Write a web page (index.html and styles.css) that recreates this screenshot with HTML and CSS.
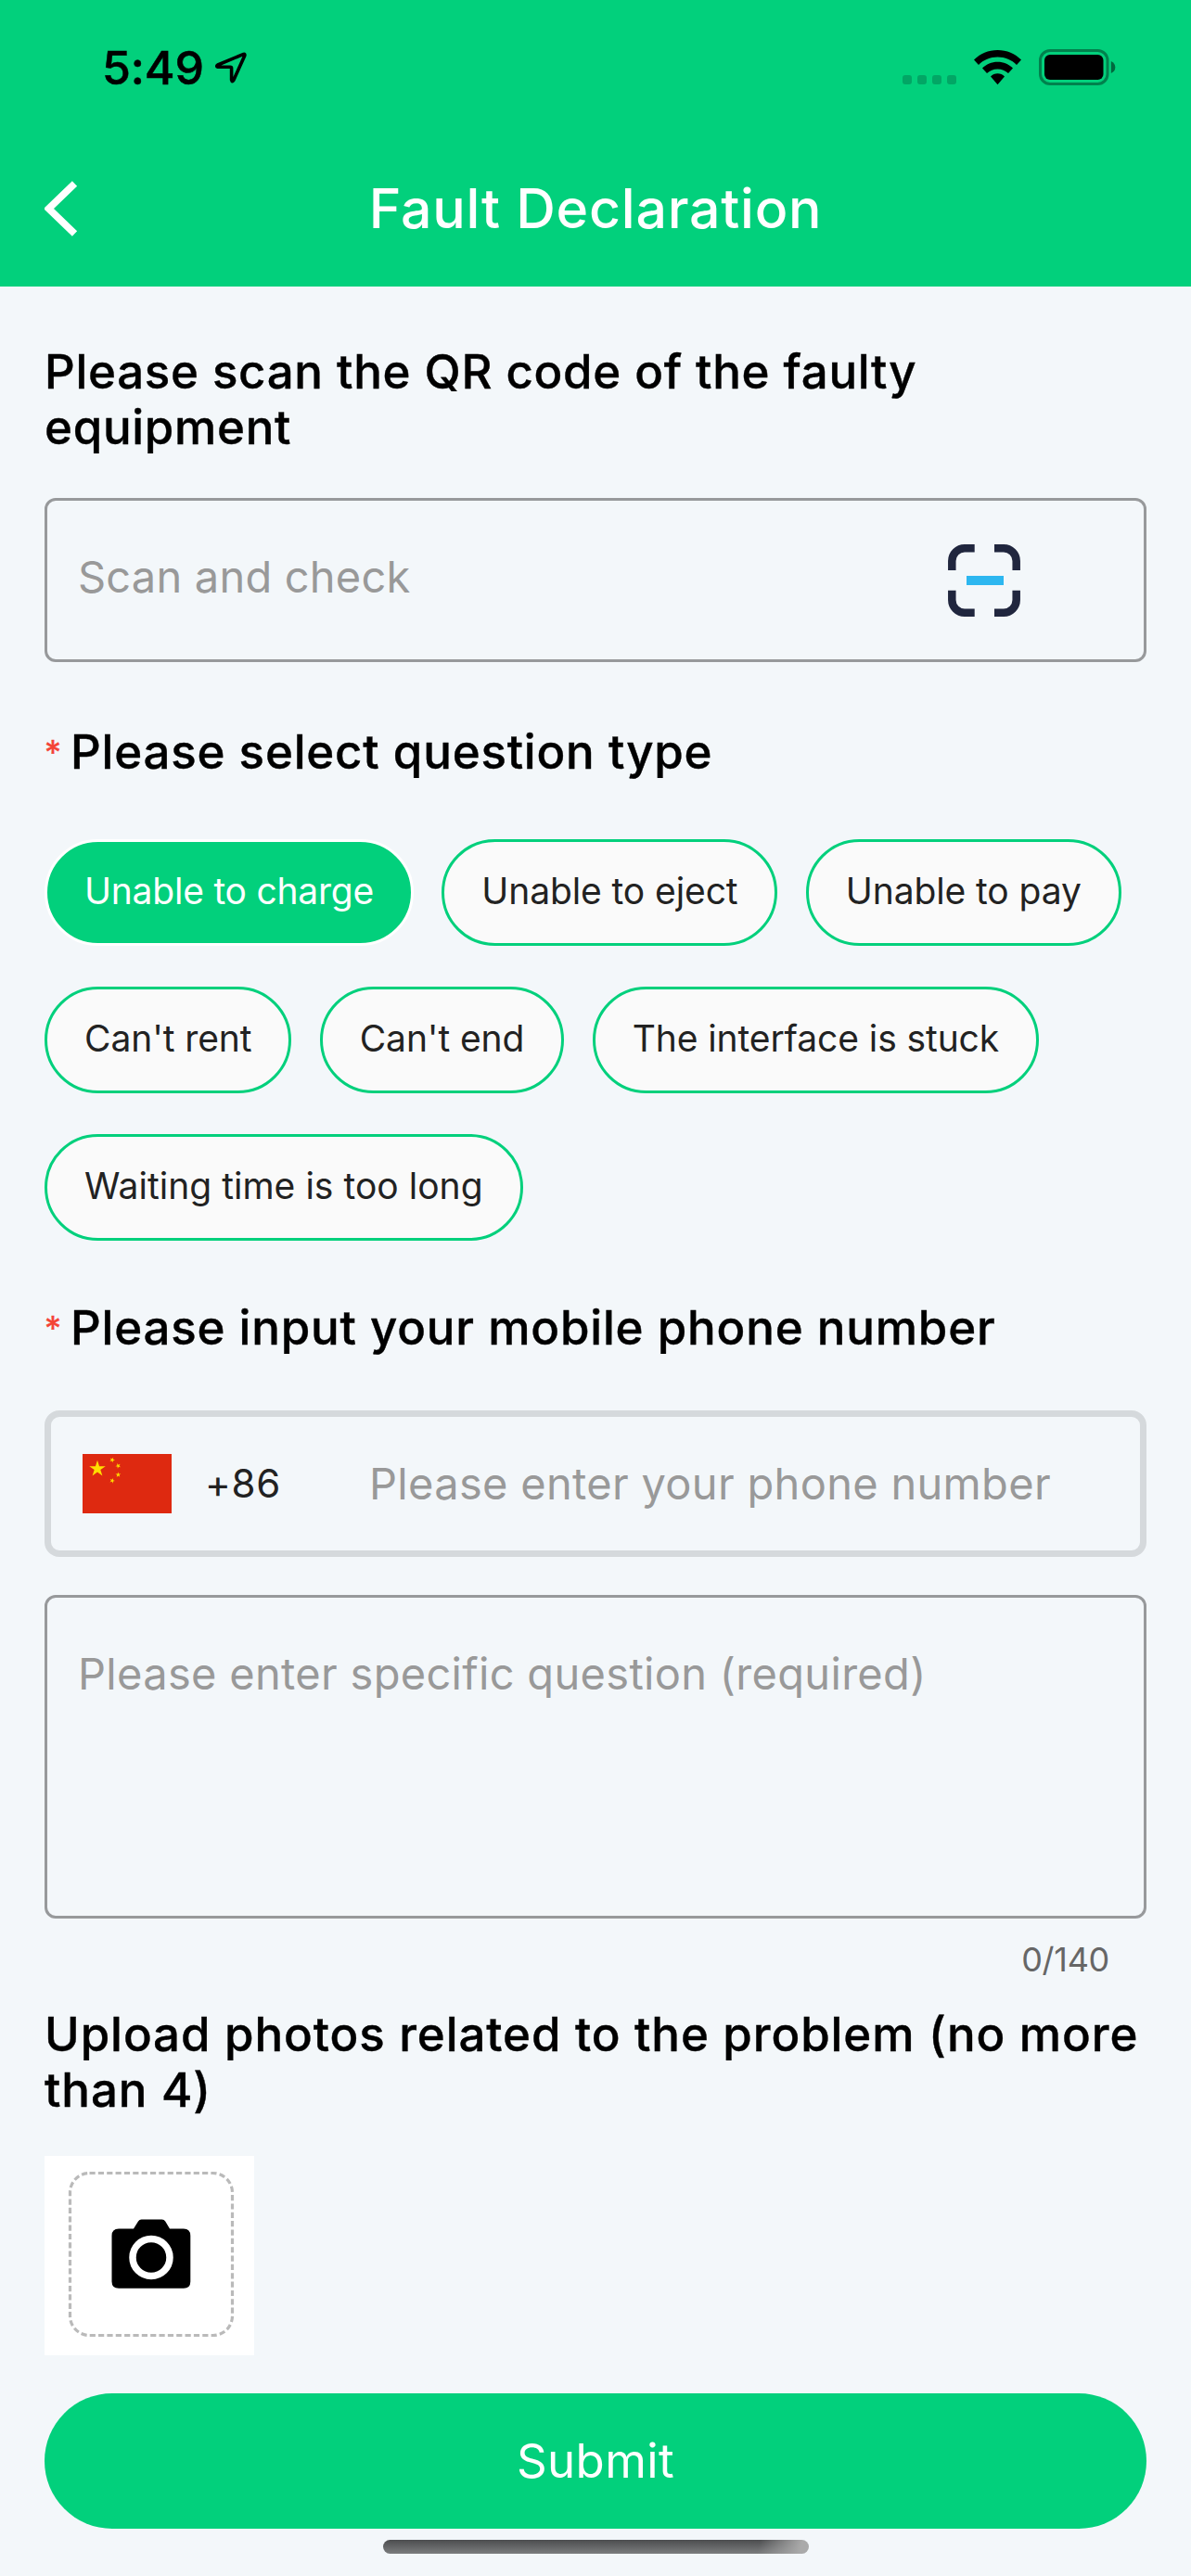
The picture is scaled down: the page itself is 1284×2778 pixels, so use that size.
FILE: index.html
```html
<!DOCTYPE html>
<html lang="en">
<head>
<meta charset="utf-8">
<title>Fault Declaration</title>
<link rel="stylesheet" href="styles.css">
</head>
<body>
<header class="header">
  <div class="status">
    <div class="status-left">
      <span class="time">5:49</span>
      <svg class="location" width="34" height="34" viewBox="0 0 34 34"><path d="M30.600 2.400L2.800 14Q.6 15.600 2.900 16.200H16.200Q17.600 16.200 17.600 17.600V30.200Q18.200 33 19.800 30.600L31.800 4Q32.200 2 30.600 2.400Z" fill="none" stroke="#000" stroke-width="3.600" stroke-linejoin="round"/></svg>
    </div>
    <div class="status-right">
      <div class="signal"><i></i><i></i><i></i><i></i></div>
      <svg class="wifi" width="51" height="38" viewBox="0 0 51 38"><path d="M25.5 0C35.400 0 44.400 3.900 51 10.600L46 16C40.700 10.700 33.500 7.600 25.500 7.600S10.300 10.700 5 16L0 10.600C6.600 3.900 15.600 0 25.500 0Z"/><path d="M25.500 12.700C31.900 12.700 37.700 15.200 42 19.400L37 25C34 22.200 30 20.400 25.500 20.400S17 22.200 14 25L9 19.400C13.300 15.200 19.100 12.700 25.500 12.700Z"/><path d="M25.500 25.300C28.400 25.300 31 26.400 33 28.400L25.500 37.300L18 28.400C20 26.400 22.600 25.300 25.500 25.300Z"/></svg>
      <svg class="battery" width="83" height="39" viewBox="0 0 83 39"><rect x="1.5" y="1.500" width="72.500" height="36" rx="10.500" fill="none" stroke="#000" stroke-opacity=".38" stroke-width="3"/><rect x="6" y="6" width="63.500" height="27" rx="6"/><path d="M77.800 13Q82.300 15 82.300 19.500T77.800 26Z" fill-opacity=".5"/></svg>
    </div>
  </div>
  <nav class="nav">
    <svg class="back" width="36" height="60" viewBox="0 0 36 60"><path d="M32.500 3L4.500 30L32.500 57" fill="none" stroke="#fff" stroke-width="7.600"/></svg>
    <h1 class="title">Fault Declaration</h1>
  </nav>
</header>
<main class="form">
  <h2 class="label">Please scan the QR code of the faulty<br>equipment</h2>
  <div class="field scan">
    <span class="placeholder">Scan and check</span>
    <svg width="78" height="78" viewBox="0 0 78 78" fill="none" stroke="#20263e" stroke-width="8.500"><path d="M4.300 28V18A13.700 13.700 0 0 1 18 4.300H28.700M50 4.300H60A13.700 13.700 0 0 1 73.700 18V28M4.300 49.700V60A13.700 13.700 0 0 0 18 73.700H28.700M50 73.700H60A13.700 13.700 0 0 0 73.700 60V49.700"/><path d="M20 39H60" stroke="#2db7f0" stroke-width="10"/></svg>
  </div>
  <h2 class="label required"><i class="star">*</i>Please select question type</h2>
  <div class="chips">
    <div class="chip-row"><button class="chip active">Unable to charge</button><button class="chip">Unable to eject</button><button class="chip">Unable to pay</button></div>
    <div class="chip-row"><button class="chip">Can't rent</button><button class="chip">Can't end</button><button class="chip">The interface is stuck</button></div>
    <div class="chip-row"><button class="chip wide">Waiting time is too long</button></div>
  </div>
  <h2 class="label required"><i class="star">*</i>Please input your mobile phone number</h2>
  <div class="field phone">
    <svg width="96" height="64" viewBox="0 0 96 64"><defs><path id="star" d="M0 -1L.2245 -.309H.951L.363 .118L.588 .809L0 .382L-.588 .809L-.363 .118L-.951 -.309H-.2245Z"/></defs><path fill="#de2910" d="M0 0H96V64H0Z"/><g fill="#ffde00"><use href="#star" transform="translate(16 16) scale(9.200)"/><use href="#star" transform="translate(32 6.400) rotate(23) scale(3)"/><use href="#star" transform="translate(38.400 12.800) rotate(46) scale(3)"/><use href="#star" transform="translate(38.400 22.400) rotate(70) scale(3)"/><use href="#star" transform="translate(32 28.800) rotate(21) scale(3)"/></g></svg>
    <span class="code">+86</span>
    <span class="placeholder">Please enter your phone number</span>
  </div>
  <div class="field details"><span class="placeholder">Please enter specific question (required)</span></div>
  <div class="counter">0/140</div>
  <h2 class="label upload-label">Upload photos related to the problem (no more<br>than 4)</h2>
  <div class="upload">
    <svg width="226" height="215" viewBox="0 0 226 215"><rect x="27.500" y="18.500" width="175" height="175" rx="21" fill="none" stroke="#bababa" stroke-width="3.200" stroke-dasharray="6.200 3.150"/><path d="M80 78.500H96L101 70.500Q102.200 68.500 104.500 68.500H126.500Q129 68.500 130.200 70.500L135 78.500H150Q157.300 78.500 157.300 86V135.500Q157.300 142.700 150 142.700H80Q72.500 142.700 72.500 135.500V86Q72.500 78.500 80 78.500Z"/><circle cx="115" cy="109.500" r="20" fill="none" stroke="#fff" stroke-width="7.500"/></svg>
  </div>
  <button class="submit">Submit</button>
</main>
<div class="home"></div>
</body>
</html>
```
FILE: styles.css
```css
* { box-sizing: border-box; }
body {
  margin: 0;
  width: 1284px;
  height: 2778px;
  overflow: hidden;
  background: #f3f7fa;
  color: #000;
  font-family: Inter, "Liberation Sans", sans-serif;
}
svg { display: block; flex: none; }
.header { height: 309px; background: #02d07c; }
.status { height: 141px; padding: 4px 81px 0 110px; display: flex; justify-content: space-between; align-items: center; }
.status-left, .status-right { display: flex; align-items: center; }
.time { font-size: 50px; font-weight: 500; line-height: 60px; letter-spacing: -.1px; -webkit-text-stroke: .5px #000; }
.location { margin-left: 12px; }
.signal { display: flex; gap: 6px; padding-top: 27px; margin-right: 19px; }
.signal i { width: 10px; height: 10px; border-radius: 3px; background: #02a665; }
.wifi { margin-right: 19px; }
.nav { height: 168px; padding: 0 48px; display: grid; grid-template-columns: 36px 1fr 36px; align-items: center; }
.title { margin: 0; color: #fff; font-size: 59px; font-weight: 500; line-height: 72px; letter-spacing: .75px; text-align: center; }
.form { padding: 62px 48px 0; display: flex; flex-direction: column; }
.label { margin: 0; font-size: 51px; font-weight: 500; line-height: 60px; letter-spacing: .7px; white-space: nowrap; -webkit-text-stroke: .4px #000; }
.required { display: flex; letter-spacing: .8px; }
.star { width: 28px; color: #f44336; font-size: 36px; font-style: normal; font-weight: 400; -webkit-text-stroke: .4px #f44336; }
.upload-label { letter-spacing: .92px; }
.field { display: flex; align-items: center; border: 3px solid #97999b; border-radius: 12px; }
.placeholder { font-size: 47px; line-height: 58px; letter-spacing: .31px; color: #999; white-space: nowrap; }
.scan { height: 177px; margin: 46px 0 67px; padding: 0 133px 0 33px; justify-content: space-between; }
.scan .placeholder { padding-bottom: 8px; letter-spacing: .2px; }
.chips { display: flex; flex-direction: column; gap: 44px; margin: 64px 0; }
.chip-row { display: flex; gap: 30.300px; }
.chip { height: 115px; padding: 0 40px 3px; border: 3px solid #02d07c; border-radius: 58px; background: #fafafa; color: #222; font: 400 39px/48px Inter, "Liberation Sans", sans-serif; letter-spacing: -.1px; white-space: nowrap; }
.chip.active { border-color: #fff; background: #02d07c; color: #fff; letter-spacing: -.23px; }
.chip.wide { letter-spacing: .03px; }
.phone { height: 158px; margin-top: 59px; padding: 0 33px 0 34px; border: 7px solid #d5d9dc; border-radius: 16px; }
.code { width: 177px; margin-left: 36px; padding-bottom: 2px; font-size: 42px; letter-spacing: .8px; color: #222; }
.details { height: 349px; margin-top: 41px; padding: 53px 33px; align-items: flex-start; }
.counter { height: 44px; margin: 22px 40px 29px; text-align: right; font-size: 36px; line-height: 44px; letter-spacing: -.3px; color: #666; }
.upload { width: 226px; height: 215px; margin: 41px 0; background: #fff; }
.submit { height: 146px; padding: 0; border: 0; border-radius: 73px; background: #02d07c; color: #fff; font: 400 51px/62px Inter, "Liberation Sans", sans-serif; letter-spacing: .4px; }
.home { width: 459px; height: 15px; margin: 12px auto 0; border-radius: 8px; background: linear-gradient(100deg, transparent 88%, #aaa 98%), linear-gradient(#4c4d4f, #7b7d7e); }
```
